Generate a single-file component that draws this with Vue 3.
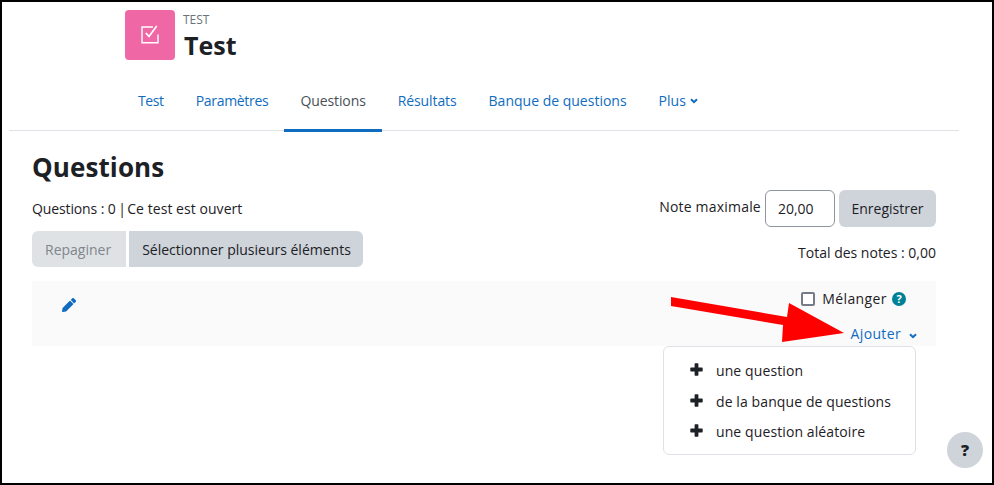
<script setup>
const tabs = [
  { label: 'Test', ls: -0.4 },
  { label: 'Paramètres', ls: -0.3 },
  { label: 'Questions', ls: -0.1 },
  { label: 'Résultats', ls: -0.1 },
  { label: 'Banque de questions', ls: 0 },
]
const items = ['une question', 'de la banque de questions', 'une question aléatoire']
</script>

<template>
  <div class="frame">
    <header class="head">
      <div class="tile">
        <svg width="20" height="20" viewBox="0 0 20 20" fill="none" stroke="#fff" stroke-width="1.4">
          <path d="M18 9.5V17.7H2V2H13" />
          <path d="M5.8 8L9 11.4L16.7 1" stroke-width="1.7" />
        </svg>
      </div>
      <div class="titles">
        <div class="kicker">TEST</div>
        <h1 class="title">Test</h1>
      </div>
    </header>
    <nav class="tabs">
      <a
        v-for="t in tabs"
        :key="t.label"
        class="tab"
        :class="{ active: t.label === 'Questions' }"
        :style="{ letterSpacing: t.ls + 'px' }"
      >{{ t.label }}</a>
      <a class="tab">Plus
        <svg class="chev" width="8" height="6" viewBox="0 0 8 6" fill="none" stroke="#0f6cbf" stroke-width="2"><path d="M1 1.2L4 4.2L7 1.2" /></svg>
      </a>
    </nav>
    <main class="content">
      <h2 class="heading">Questions</h2>
      <div class="row-info">
        <div class="left">
          <div class="status">Questions : 0 <span class="sep">|</span> <span class="open">Ce test est ouvert</span></div>
          <div class="btn-group">
            <button class="btn disabled">Repaginer</button>
            <button class="btn second">Sélectionner plusieurs éléments</button>
          </div>
        </div>
        <div class="right">
          <div class="grade">
            <label class="grade-label">Note maximale</label>
            <div class="input">20,00</div>
            <button class="btn save">Enregistrer</button>
          </div>
          <div class="total">Total des notes : 0,00</div>
        </div>
      </div>
      <section class="bar">
        <svg class="pencil" width="14" height="14" viewBox="0 0 512 512" fill="#0f6cbf">
          <path d="M497.9 142.1l-46.1 46.1c-4.7 4.7-12.3 4.7-17 0l-111-111c-4.7-4.7-4.7-12.3 0-17l46.1-46.1c18.7-18.7 49.1-18.7 67.9 0l60.1 60.1c18.8 18.7 18.8 49.1 0 67.9zM284.2 99.8L21.6 362.4.4 483.9c-2.9 16.4 11.4 30.6 27.8 27.8l121.5-21.3 262.6-262.6c4.3-4.3 4.3-11.3 0-15.6l-111.4-111.4c-4.4-4.3-11.4-4.3-15.7 0z" />
        </svg>
        <div class="bar-right">
          <div class="shuffle">
            <span class="check"></span>
            <span class="shuffle-label">Mélanger</span>
            <span class="help">?</span>
          </div>
          <a class="add">Ajouter
            <svg class="chev add-chev" width="8" height="6" viewBox="0 0 8 6" fill="none" stroke="#0f6cbf" stroke-width="2"><path d="M1 1.2L4 4.2L7 1.2" /></svg>
          </a>
        </div>
        <div class="menu">
          <div v-for="i in items" :key="i" class="menu-item">
            <svg class="plus" width="13" height="13" viewBox="0 0 13 13" fill="#1d2125">
              <path d="M5.2 .3H7.8Q8.4 .3 8.4 1V4.6H12Q12.7 4.6 12.7 5.2V7.8Q12.7 8.4 12 8.4H8.4V12Q8.4 12.7 7.8 12.7H5.2Q4.6 12.7 4.6 12V8.4H1Q.3 8.4 .3 7.8V5.2Q.3 4.6 1 4.6H4.6V1Q4.6 .3 5.2 .3Z" />
            </svg>
            <span class="item-text">{{ i }}</span>
          </div>
        </div>
        <svg class="arrow" width="180" height="60" viewBox="0 0 180 60">
          <polygon points="1,2 117,22 119,8 174,38 112,47 113,30 1,11" fill="#fe0000" />
        </svg>
      </section>
    </main>
    <button class="fab">?</button>
  </div>
</template>

<style>
html, body { margin: 0; padding: 0; background: #fff; }
</style>

<style scoped>
.frame {
  position: relative;
  box-sizing: border-box;
  width: 994px;
  height: 485px;
  border: 2px solid #000;
  background: #fff;
  font-family: "Open Sans", "Noto Sans", sans-serif;
  font-size: 14px;
  color: #1d2125;
  overflow: hidden;
}
.head { display: flex; gap: 9px; padding: 8px 0 0 123px; height: 60px; box-sizing: border-box; }
.tile {
  width: 50px; height: 50px; border-radius: 4px; background: #ef68a5;
  display: flex; align-items: center; justify-content: center; flex: none;
}
.titles { display: flex; flex-direction: column; }
.kicker { font-size: 12px; line-height: 16px; margin-top: 2px; margin-left: -1px; color: #6a737b; }
.title { margin: 0; font-size: 25px; line-height: 32px; margin-top: 1px; font-weight: 700; color: #1d2125; }
.tabs {
  display: flex; height: 68px; margin: 0 33px 0 7px; padding-left: 113px;
  border-bottom: 1px solid #dee2e6;
}
.tab {
  display: flex; align-items: center; gap: 4px; padding: 10px 16px 0; height: 57px;
  color: #0f6cbf; white-space: nowrap;
  border-bottom: 3px solid transparent;
}
.tab.active { color: #495057; border-bottom-color: #0f6cbf; }
.chev { flex: none; }
.content { padding: 18px 56px 0 30px; }
.heading { margin: 0; font-size: 26px; line-height: 36px; font-weight: 700; letter-spacing: .1px; }
.row-info { display: flex; justify-content: space-between; margin-top: 4px; }
.status { line-height: 18px; margin-top: 11px; letter-spacing: -.12px; }
.sep { margin-left: -1px; }
.open { margin-left: -2px; letter-spacing: .05px; }
.btn-group { display: flex; gap: 3px; margin-top: 13px; }
.btn {
  font: inherit; border: 0; height: 36px; padding: 0 13px; background: #ced4da; color: #1d2125;
  white-space: nowrap;
}
.btn.disabled { background: #dee2e5; color: #80868c; border-radius: 6px 0 0 6px; padding: 0 15px 0 13px; }
.btn.second { border-radius: 0 6px 6px 0; padding: 0 12px 0 13px; }
.right { display: flex; flex-direction: column; align-items: flex-end; }
.grade { display: flex; align-items: flex-start; gap: 4px; margin-top: 1px; }
.grade-label { line-height: 18px; margin-top: 8px; letter-spacing: .2px; }
.input {
  box-sizing: border-box; width: 70px; height: 37px; border: 1px solid #8f959e; border-radius: 6px;
  display: flex; align-items: center; padding-left: 12px;
}
.btn.save { border-radius: 6px; height: 37px; padding: 0 12.5px; }
.total { margin-top: 17px; line-height: 18px; }
.bar { position: relative; height: 65px; margin-top: 14px; background: #fafafa; }
.pencil { position: absolute; left: 30px; top: 17px; }
.bar-right { display: flex; flex-direction: column; align-items: flex-end; padding-right: 19px; }
.shuffle { display: flex; align-items: center; height: 18px; margin-top: 8px; padding-right: 11px; }
.shuffle-label { letter-spacing: .4px; }
.check {
  box-sizing: border-box; width: 14px; height: 14px; border: 2px solid #757c85; border-radius: 2px;
  background: #fff; margin-right: 7px; margin-top: 1px;
}
.help {
  display: inline-flex; align-items: center; justify-content: center; width: 14px; height: 14px;
  border-radius: 50%; background: #008196; color: #fff; font-size: 11px; font-weight: 700; margin-left: 5px;
  margin-top: 1px;
}
.add { display: flex; align-items: center; gap: 8px; margin-top: 18px; color: #0f6cbf; line-height: 18px; letter-spacing: .35px; }
.add-chev { margin-top: 3px; }
.menu {
  position: absolute; left: 631px; top: 65px; box-sizing: border-box; width: 253px; height: 109px;
  background: #fff; border: 1px solid #dee2e6; border-radius: 6px; padding: 8.4px 0 0 26px; z-index: 2;
}
.menu-item { display: flex; align-items: center; height: 30.5px; gap: 13px; }
.item-text { letter-spacing: .1px; }
.plus { flex: none; margin-top: -2px; }
.arrow { position: absolute; left: 638px; top: 14px; z-index: 3; pointer-events: none; }
.fab {
  position: absolute; left: 945px; top: 430px; width: 36px; height: 36px; border: 0; border-radius: 50%;
  background: #ced4da; color: #1d2125; font: 800 16px "Open Sans", sans-serif; padding: 0;
}
</style>
